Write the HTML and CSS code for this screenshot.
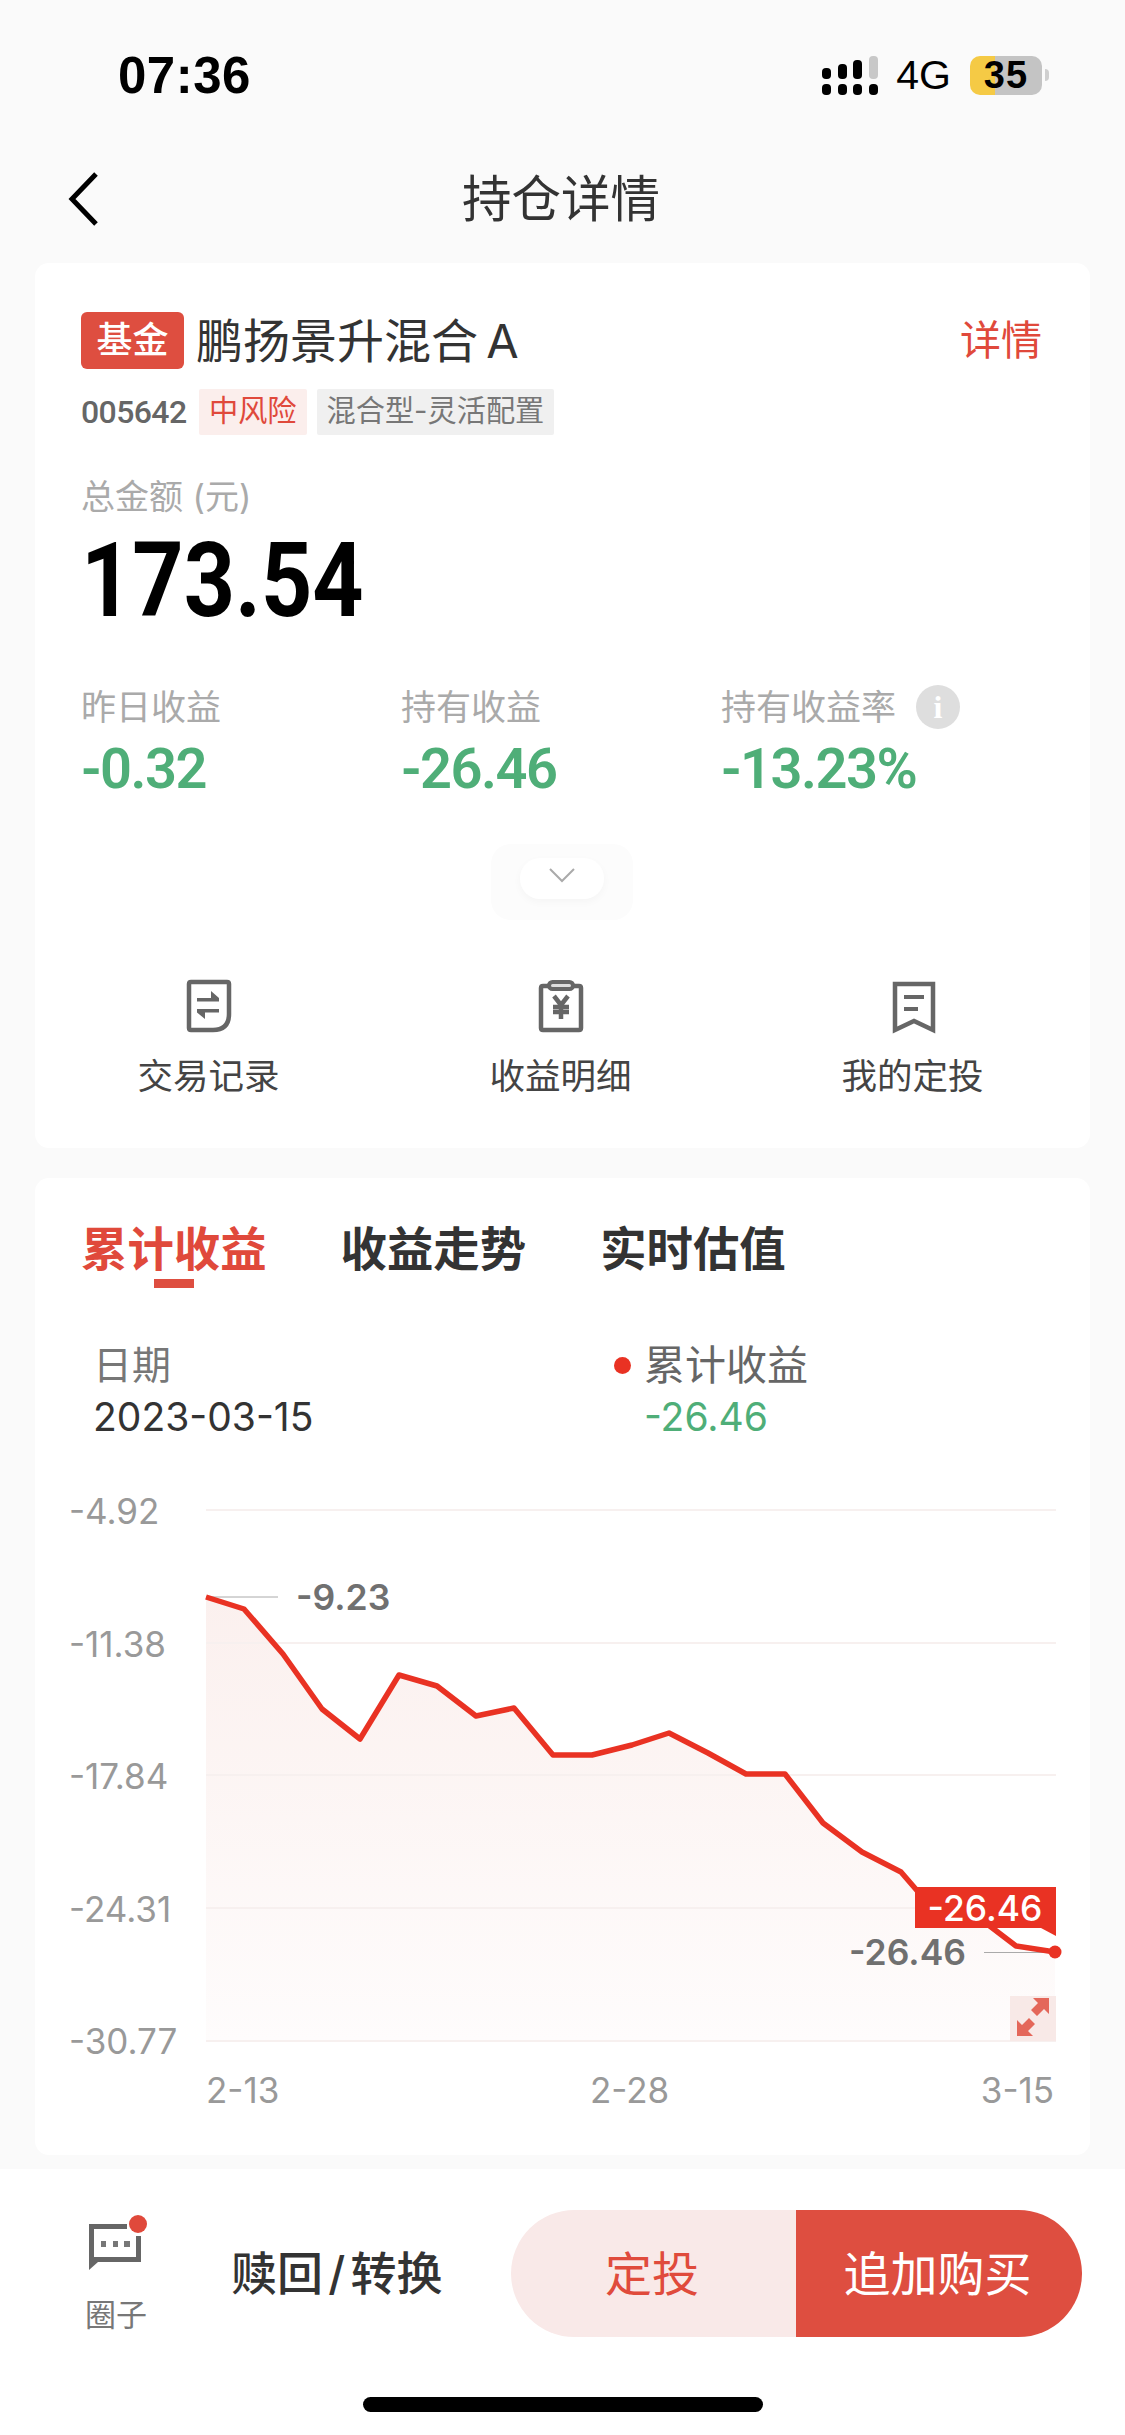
FILE: index.html
```html
<!DOCTYPE html>
<html lang="zh-CN">
<head>
<meta charset="utf-8">
<title>持仓详情</title>
<link rel="stylesheet" href="styles.css">
</head>
<body>
<div class="page">
  <header class="status">
    <span class="time">07:36</span>
    <div class="status-right">
      <svg class="signal" viewBox="0 0 56 39" width="56" height="39">
        <rect class="sig-on" x="0" y="12" width="9" height="11" rx="4"/>
        <rect class="sig-on" x="16" y="8" width="9" height="15" rx="4"/>
        <rect class="sig-on" x="31" y="4" width="9" height="19" rx="4"/>
        <rect class="sig-off" x="47" y="0" width="9" height="23" rx="4"/>
        <rect class="sig-on" x="0" y="28" width="9" height="11" rx="4"/>
        <rect class="sig-on" x="16" y="28" width="9" height="11" rx="4"/>
        <rect class="sig-on" x="31" y="28" width="9" height="11" rx="4"/>
        <rect class="sig-on" x="47" y="28" width="9" height="11" rx="4"/>
      </svg>
      <span class="net">4G</span>
      <div class="battery"><span>35</span></div>
      <span class="battery-nub"></span>
    </div>
  </header>

  <nav class="nav">
    <svg class="back" viewBox="0 0 32 54" width="32" height="54"><path d="M28 2 L4 27 L28 52"/></svg>
    <h1 class="nav-title">持仓详情</h1>
  </nav>

  <section class="card card-top">
    <div class="fund-head">
      <span class="fund-badge">基金</span>
      <span class="fund-name">鹏扬景升混合 A</span>
      <span class="fund-link">详情</span>
    </div>
    <div class="fund-tags">
      <span class="fund-code">005642</span>
      <span class="tag tag-risk">中风险</span>
      <span class="tag tag-type">混合型-灵活配置</span>
    </div>
    <div class="total-label">总金额 (元)</div>
    <div class="total-value"><span>173.54</span></div>

    <div class="metrics">
      <div class="metric">
        <div class="metric-label">昨日收益</div>
        <div class="metric-value">-0.32</div>
      </div>
      <div class="metric">
        <div class="metric-label">持有收益</div>
        <div class="metric-value">-26.46</div>
      </div>
      <div class="metric">
        <div class="metric-label">持有收益率<span class="info">i</span></div>
        <div class="metric-value">-13.23%</div>
      </div>
    </div>

    <div class="expand-wrap">
      <div class="expand-pill">
        <svg viewBox="0 0 26 15" width="26" height="15"><path d="M1 1 L13 13 L25 1"/></svg>
      </div>
    </div>

    <div class="actions">
      <div class="action">
        <svg class="action-icon" viewBox="0 0 46 56" width="46" height="56">
          <path class="ic-line" d="M5 4 H41 Q43 4 43 6 V36 Q43 52 27 52 H5 Q3 52 3 50 V6 Q3 4 5 4 Z"/>
          <path class="ic-fill" d="M11 20 H33 V23.5 H11 Z M25 13 L33 20 H25 Z M11 31 H33 V34.5 H11 Z M19 41 L11 34.5 H19 Z"/>
        </svg>
        <span>交易记录</span>
      </div>
      <div class="action">
        <svg class="action-icon" viewBox="0 0 46 56" width="46" height="56">
          <path class="ic-line" d="M11 8 H5 Q3 8 3 10 V50 Q3 52 5 52 H41 Q43 52 43 50 V10 Q43 8 41 8 H35"/>
          <rect class="ic-clip" x="11" y="4" width="24" height="7" rx="3.5"/>
          <path class="ic-yen" d="M16 18 L23 27 L30 18 M15 29 H31 M15 34 H31 M23 27 V41"/>
        </svg>
        <span>收益明细</span>
      </div>
      <div class="action action-book">
        <svg class="action-icon" viewBox="0 0 46 56" width="46" height="56">
          <path class="ic-line" d="M4 6 H42 V52 L23 43 L4 52 Z"/>
          <path class="ic-fill" d="M13 17 H33 V21 H13 Z M13 29 H27 V33 H13 Z"/>
        </svg>
        <span>我的定投</span>
      </div>
    </div>
  </section>

  <section class="card card-chart">
    <div class="tabs">
      <div class="tab tab-active">累计收益</div>
      <div class="tab">收益走势</div>
      <div class="tab">实时估值</div>
    </div>
    <div class="readout">
      <div class="readout-date">
        <div class="readout-label">日期</div>
        <div class="readout-num">2023-03-15</div>
      </div>
      <div class="readout-series">
        <div class="series-label"><i class="series-dot"></i>累计收益</div>
        <div class="series-num">-26.46</div>
      </div>
    </div>
    <svg class="chart" viewBox="35 1490 1055 640" width="1055" height="640">
      <defs>
        <linearGradient id="area" x1="0" y1="0" x2="0" y2="1">
          <stop offset="0" stop-color="#fbf0ee"/>
          <stop offset="1" stop-color="#fefcfc"/>
        </linearGradient>
      </defs>
      <path fill="url(#area)" d="M206 1597 L244 1609 L283 1654 L322 1709 L360 1739 L399 1675 L437 1686 L476 1716 L514 1708 L553 1755 L592 1755 L632 1745 L669 1733 L708 1753 L746 1774 L785 1774 L823 1823 L862 1852 L901 1872 L939 1916 L978 1917 L1016 1946 L1055 1952 V2041 H206 Z"/>
      <path class="grid" d="M206 1510 H1056 M206 1643 H1056 M206 1775 H1056 M206 1908 H1056 M206 2041 H1056"/>
      <path class="leader" d="M206 1597 H278 M984 1952.5 H1050"/>
      <path class="trend" d="M206 1597 L244 1609 L283 1654 L322 1709 L360 1739 L399 1675 L437 1686 L476 1716 L514 1708 L553 1755 L592 1755 L632 1745 L669 1733 L708 1753 L746 1774 L785 1774 L823 1823 L862 1852 L901 1872 L939 1916 L978 1917 L1016 1946 L1055 1952"/>
      <circle class="end-dot" cx="1055" cy="1952" r="6.5"/>
      <path class="end-tag" d="M915 1887 H1056 V1936 L1041 1928 H915 Z"/>
      <text class="t-tag" x="985" y="1921" text-anchor="middle">-26.46</text>
      <text class="t-mark" x="296" y="1610">-9.23</text>
      <text class="t-mark" x="849" y="1965">-26.46</text>
      <text class="t-axis" x="69" y="1524">-4.92</text>
      <text class="t-axis" x="69" y="1657">-11.38</text>
      <text class="t-axis" x="69" y="1789">-17.84</text>
      <text class="t-axis" x="69" y="1922">-24.31</text>
      <text class="t-axis" x="69" y="2054">-30.77</text>
      <text class="t-axis" x="206" y="2103">2-13</text>
      <text class="t-axis" x="590" y="2103">2-28</text>
      <text class="t-axis" x="1054" y="2103" text-anchor="end">3-15</text>
      <rect class="zoom-bg" x="1010" y="1996" width="46" height="45"/>
      <path class="zoom-ic" d="M1033 1998 H1049 V2014 L1044 2009 L1037 2016 L1031 2010 L1038 2003 Z M1017 2036 V2020 L1022 2025 L1029 2018 L1035 2024 L1028 2031 L1033 2036 Z"/>
    </svg>
  </section>

  <footer class="bottom">
    <div class="bottom-bar">
      <div class="circle">
        <div class="circle-icon">
          <svg viewBox="0 0 60 52" width="60" height="52">
            <path class="chat" d="M39 6 H1 V52 L10 44 H53 V18 H48 V39 H6 V11 H39 Z"/>
            <path class="chat-dots" d="M13 23 h5 v6 h-5 Z M25 23 h5 v6 h-5 Z M36 23 h6 v6 h-6 Z"/>
          </svg>
          <span class="circle-dot"></span>
        </div>
        <span class="circle-label">圈子</span>
      </div>
      <div class="redeem">赎回 / 转换</div>
      <div class="cta">
        <div class="cta-left">定投</div>
        <div class="cta-right">追加购买</div>
      </div>
    </div>
    <div class="home-bar"></div>
  </footer>
</div>
</body>
</html>
```
FILE: styles.css
```css
* { box-sizing: border-box; }
html, body { margin: 0; padding: 0; }
body {
  font-family: "Inter", "Noto Sans CJK SC", sans-serif;
  background: #fafafa;
  color: #333;
}
.page {
  width: 1125px;
  height: 2435px;
  overflow: hidden;
  display: flex;
  flex-direction: column;
  background: #fafafa;
}

/* status bar */
.status {
  height: 150px;
  padding: 0 76px 0 118px;
  display: flex;
  align-items: center;
  justify-content: space-between;
}
.time {
  font-family: "Liberation Sans", sans-serif;
  font-size: 51px;
  font-weight: 700;
  color: #000;
  letter-spacing: 0.5px;
}
.status-right { display: flex; align-items: center; }
.signal { display: block; margin-right: 18px; }
.sig-on { fill: #000; }
.sig-off { fill: #c8c8c8; }
.net {
  font-family: "Liberation Sans", sans-serif;
  font-size: 41px;
  color: #000;
  line-height: 39px;
  margin-right: 19px;
}
.battery {
  width: 72px;
  height: 39px;
  border-radius: 10px;
  background: linear-gradient(to right, #f5ca45 35%, #c4c4c4 35%);
  display: flex;
  align-items: center;
  justify-content: center;
  font-family: "Liberation Sans", sans-serif;
  font-size: 38px;
  font-weight: 700;
  color: #000;
  letter-spacing: 1px;
}
.battery-nub {
  width: 4px;
  height: 12px;
  margin-left: 3px;
  background: #cfcfcf;
  border-radius: 0 4px 4px 0;
}

/* navigation */
.nav {
  height: 113px;
  padding: 0 3px 15px 0;
  display: flex;
  align-items: center;
  justify-content: center;
  position: relative;
}
.back {
  position: absolute;
  left: 68px;
  top: 22px;
  fill: none;
  stroke: #000;
  stroke-width: 5;
}
.nav-title {
  margin: 0;
  font-size: 49.5px;
  font-weight: 400;
  line-height: 64px;
  color: #333;
}

/* cards */
.card {
  margin: 0 35px;
  background: #fff;
  border-radius: 14px;
}
.card-top {
  height: 885px;
  padding: 49px 46px 0;
}
.card-chart {
  height: 977px;
  margin-top: 30px;
}

/* fund head */
.fund-head {
  height: 57px;
  display: flex;
  align-items: center;
}
.fund-badge {
  width: 103px;
  height: 57px;
  border-radius: 6px;
  background: #de4e40;
  color: #fff;
  font-size: 36px;
  font-weight: 500;
  line-height: 57px;
  text-align: center;
}
.fund-name {
  margin-left: 12px;
  font-size: 47px;
  line-height: 57px;
  color: #333;
  flex: 1;
  word-spacing: -5px;
}
.fund-link {
  font-size: 41px;
  line-height: 57px;
  color: #e0493b;
  margin-right: 2px;
}
.fund-tags {
  margin-top: 20px;
  height: 46px;
  display: flex;
  align-items: center;
}
.fund-code {
  font-family: "Roboto", sans-serif;
  font-weight: 500;
  font-size: 32px;
  letter-spacing: -0.6px;
  color: #666;
  width: 118px;
}
.tag {
  height: 46px;
  line-height: 44px;
  font-size: 29.2px;
  padding: 0 10px;
  border-radius: 2px;
  margin-right: 10px;
}
.tag-risk { background: #fbeeec; color: #e0493b; }
.tag-type { background: #f0f0f0; color: #777; }

/* totals */
.total-label {
  margin-top: 45px;
  font-size: 34px;
  line-height: 34px;
  color: #aaa;
}
.total-value {
  margin-top: 17px;
  height: 100px;
  font-family: "Roboto", sans-serif;
  font-size: 104px;
  font-weight: 700;
  line-height: 100px;
  color: #000;
}
.total-value span {
  display: inline-block;
  transform: scaleX(0.86);
  transform-origin: left center;
}

/* metrics */
.metrics {
  margin-top: 56px;
  display: grid;
  grid-template-columns: 320px 320px 1fr;
}
.metric-label {
  display: flex;
  align-items: center;
  height: 40px;
  font-size: 35px;
  line-height: 40px;
  color: #aaa;
}
.info {
  width: 44px;
  height: 44px;
  flex: none;
  border-radius: 50%;
  margin-left: 20px;
  background: #dedede;
  color: #fff;
  font-family: "Liberation Serif", serif;
  font-weight: 700;
  font-size: 32px;
  line-height: 44px;
  text-align: center;
}
.metric-value {
  margin-top: 12px;
  font-family: "Roboto", sans-serif;
  font-size: 56px;
  font-weight: 600;
  line-height: 60px;
  letter-spacing: -1.5px;
  color: #4fae78;
}

/* expand */
.expand-wrap {
  margin-top: 45px;
  width: 142px;
  height: 76px;
  margin-left: 410px;
  padding: 14px 29px 0;
  background: #fcfcfc;
  border-radius: 20px;
}
.expand-pill {
  width: 84px;
  height: 41px;
  border-radius: 20px;
  background: #fff;
  box-shadow: 0 3px 8px rgba(0, 0, 0, 0.03);
  display: flex;
  align-items: center;
  justify-content: center;
  padding-bottom: 6px;
}
.expand-pill svg {
  fill: none;
  stroke: #aaa;
  stroke-width: 2;
}

/* actions */
.actions {
  margin: 58px -46px 0;
  padding-right: 4px;
  display: grid;
  grid-template-columns: repeat(3, 352px);
  justify-content: center;
}
.action {
  display: flex;
  flex-direction: column;
  align-items: center;
  font-size: 35.5px;
  line-height: 40px;
  color: #444;
}
.action-book .action-icon { margin-left: 3px; }
.action-icon { display: block; margin-bottom: 23px; }
.ic-line { fill: none; stroke: #666; stroke-width: 4.5; }
.ic-clip { fill: #ddd; stroke: #666; stroke-width: 4; }
.ic-fill { fill: #666; }
.ic-yen { fill: none; stroke: #666; stroke-width: 4.5; }

/* tabs */
.tabs {
  padding: 41px 0 0 46px;
  display: flex;
  gap: 74px;
}
.tab {
  display: flex;
  flex-direction: column;
  align-items: center;
  font-size: 46.4px;
  font-weight: 700;
  line-height: 60px;
  color: #333;
}
.tab::after {
  content: "";
  width: 40px;
  height: 9px;
}
.tab-active { color: #e0493b; }
.tab-active::after { background: #de4e40; }

/* readout */
.readout {
  margin-top: 55px;
  padding-left: 58px;
  display: flex;
}
.readout-date { width: 521px; }
.readout-label {
  font-size: 39px;
  line-height: 44px;
  color: #777;
}
.readout-num, .series-num {
  margin-top: 8px;
  font-size: 39px;
  line-height: 44px;
  color: #333;
}
.series-label {
  display: flex;
  align-items: center;
  font-size: 41px;
  line-height: 44px;
  color: #666;
}
.series-dot {
  width: 17px;
  height: 17px;
  border-radius: 50%;
  background: #e93223;
  margin-right: 13px;
}
.series-num {
  margin-left: 30px;
  color: #4fae78;
}

/* chart */
.chart {
  display: block;
  margin-top: 51px;
  overflow: visible;
}
.grid { fill: none; stroke: #f7f0ef; stroke-width: 2; }
.leader { fill: none; stroke: #aaa; stroke-width: 1; }
.trend {
  fill: none;
  stroke: #e93223;
  stroke-width: 5.5;
  stroke-linejoin: round;
}
.end-dot, .end-tag { fill: #e93223; }
.t-axis {
  font-family: "Inter", sans-serif;
  font-size: 35px;
  fill: #999;
}
.t-mark {
  font-family: "Inter", sans-serif;
  font-size: 35.5px;
  font-weight: 600;
  fill: #707070;
}
.t-tag {
  font-family: "Inter", sans-serif;
  font-size: 35.5px;
  font-weight: 500;
  fill: #fff;
}
.zoom-bg { fill: #f8e9e7; }
.zoom-ic { fill: #e4675a; }

/* bottom */
.bottom {
  margin-top: 14px;
  flex: 1;
  background: #fff;
  display: flex;
  flex-direction: column;
}
.bottom-bar {
  height: 168px;
  padding: 41px 43px 0 83px;
  display: flex;
}
.circle {
  width: 70px;
  display: flex;
  flex-direction: column;
  align-items: flex-start;
}
.circle-icon {
  position: relative;
  height: 60px;
  margin-left: 5px;
  padding-top: 8px;
}
.circle-icon svg { display: block; }
.chat { fill: #666; }
.chat-dots { fill: #777; }
.circle-dot {
  position: absolute;
  left: 41px;
  top: 5px;
  width: 18px;
  height: 18px;
  border-radius: 50%;
  background: #e0493b;
}
.circle-label {
  margin: 27px 0 0 2px;
  font-size: 31px;
  line-height: 36px;
  color: #777;
}
.redeem {
  margin-left: 78px;
  width: 280px;
  font-size: 46px;
  font-weight: 500;
  line-height: 127px;
  word-spacing: -7px;
  color: #333;
  white-space: nowrap;
}
.cta {
  width: 571px;
  height: 127px;
  display: flex;
  border-radius: 64px;
  overflow: hidden;
  text-align: center;
  font-size: 47px;
  line-height: 127px;
}
.cta-left {
  width: 285px;
  padding-right: 3px;
  background: #f9e9e8;
  color: #e04b3c;
}
.cta-right {
  flex: 1;
  padding-right: 3px;
  background: #de4e40;
  color: #fff;
}
.home-bar {
  width: 400px;
  height: 15px;
  margin: 60px auto 0;
  border-radius: 8px;
  background: #000;
}
```
